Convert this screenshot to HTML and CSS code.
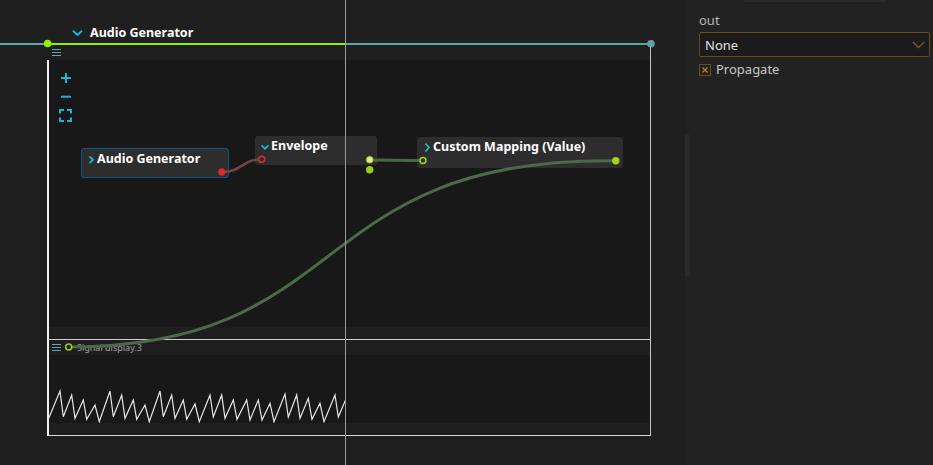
FILE: index.html
```html
<!DOCTYPE html>
<html>
<head>
<meta charset="utf-8">
<link rel="stylesheet" href="styles.css">
</head>
<body>
<div class="app">
  <div class="editor">
    <div class="group-title">
      <svg class="chev-title" width="11" height="6" viewBox="0 0 11 6"><path d="M1 0.8 L5.5 5 L10 0.8" fill="none" stroke="#19b5d6" stroke-width="2"/></svg>
      <span>Audio Generator</span>
    </div>
    <div class="frame">
      <div class="frame-head">
        <svg width="9" height="7" viewBox="0 0 9 7"><path d="M0 0.5h9M0 3.5h9M0 6.5h9" stroke="#5fa9ae" stroke-width="1"/></svg>
      </div>
      <div class="frame-body">
        <div class="canvas">
          <svg class="tool tool-plus" width="12" height="12" viewBox="0 0 12 12"><path d="M6 1v10M1 6h10" stroke="#1ab4d8" stroke-width="2"/></svg>
          <svg class="tool tool-minus" width="12" height="12" viewBox="0 0 12 12"><path d="M1 5.7h10" stroke="#1ab4d8" stroke-width="2"/></svg>
          <svg class="tool tool-fit" width="13" height="13" viewBox="0 0 13 13"><path d="M1 4.5V1h4M8 1h4v3.5M12 8.5V12H8M5 12H1V8.5" fill="none" stroke="#1ab4d8" stroke-width="2"/></svg>
        </div>
        <div class="strip"></div>
        <div class="signal">
          <div class="signal-head">
            <svg width="9" height="7" viewBox="0 0 9 7"><path d="M0 0.5h9M0 3.5h9M0 6.5h9" stroke="#5fa9ae" stroke-width="1"/></svg>
            <span class="signal-name">Signal display.3</span>
          </div>
          <div class="plot"></div>
          <div class="strip"></div>
        </div>
      </div>
    </div>

    <div class="node node-ag">
      <svg class="chev" width="8" height="16" viewBox="0 0 8 16"><path d="M2.5 6.5 L6 9.8 L2.5 13.1" fill="none" stroke="#19b5d6" stroke-width="1.8"/></svg>
      <span>Audio Generator</span>
    </div>
    <div class="node node-env">
      <svg class="chev" width="8" height="16" viewBox="0 0 8 16"><path d="M0.5 8.3 L4 11.7 L7.5 8.3" fill="none" stroke="#19b5d6" stroke-width="1.8"/></svg>
      <span>Envelope</span>
    </div>
    <div class="node node-map">
      <svg class="chev" width="8" height="16" viewBox="0 0 8 16"><path d="M2.5 5.5 L6 9.5 L2.5 13.5" fill="none" stroke="#19b5d6" stroke-width="1.8"/></svg>
      <span>Custom Mapping (Value)</span>
    </div>

    <svg class="wires" width="685" height="465" viewBox="0 0 685 465">
      <defs>
        <clipPath id="plotclip"><rect x="48" y="355" width="297" height="68"/></clipPath>
      </defs>
      <line x1="0" y1="44" x2="47" y2="44" stroke="#5fa5a8" stroke-width="2"/>
      <line x1="47" y1="44" x2="345" y2="44" stroke="#8fef00" stroke-width="2"/>
      <line x1="345" y1="44" x2="651" y2="44" stroke="#5fa5a8" stroke-width="2"/>
      <circle cx="47.6" cy="43.5" r="3.8" fill="#8fef00"/>
      <circle cx="651" cy="43.8" r="3.8" fill="#5fa5a8"/>

      <polyline clip-path="url(#plotclip)" fill="none" stroke="#e6e6e6" stroke-width="1.2" stroke-linejoin="miter"
        points="48,420 60,391 63.3,416.7 71.7,395 75,418.3 83.3,400 86.7,419.3 95,405 99.3,421.7 110,391 113.3,416.7 121.7,395 125,418.3 133.3,400 136.7,419.3 145,405 149.3,421.7 160,391 163.3,416.7 171.7,395 175,418.3 183.3,400 186.7,419.3 195,404 199.3,421.7 210,395 213.3,417 221.7,395 225,418.3 233.3,400 237,419.3 246.7,400 250,420 258.3,400 262,420 270,403.3 274,421.7 285,394 288.3,417 296.7,395 300,418.3 308.3,398.3 312,419.3 320,403.3 324,421.7 335,395 338.3,417 346,399"/>

      <path d="M222 172 C242 172 242 159.3 261.7 159.3" fill="none" stroke="#6c4846" stroke-width="2.5"/>
      <path d="M370 160 C396 160 396 160.5 423 160.5" fill="none" stroke="#4a6848" stroke-width="3"/>
      <path d="M69 347 C355 347 305 157 616 160.7" fill="none" stroke="#4b6a48" stroke-width="3"/>

      <circle cx="221.8" cy="172" r="3.7" fill="#d42b2b"/>
      <circle cx="261.7" cy="159.3" r="3" fill="#2d2d2d" stroke="#d03030" stroke-width="1.5"/>
      <circle cx="369.7" cy="159.7" r="3.3" fill="#d6ef8e" stroke="#a6d81e" stroke-width="0.8"/>
      <circle cx="369.7" cy="169.7" r="3.7" fill="#9ccc12"/>
      <circle cx="423" cy="160.4" r="3" fill="#2d2d2d" stroke="#a6d41a" stroke-width="1.5"/>
      <circle cx="615.8" cy="160.7" r="3.7" fill="#a2d418"/>
      <circle cx="68.7" cy="347" r="3" fill="#1e1e1e" stroke="#9fd014" stroke-width="1.5"/>

      <line x1="345.5" y1="0" x2="345.5" y2="465" stroke="#9a9a9a" stroke-width="1"/>
    </svg>
  </div>

  <div class="inspector">
    <div class="scroll-track"><div class="scroll-thumb"></div></div>
    <div class="insp-content">
      <div class="topbar"></div>
      <div class="label">out</div>
      <div class="select">
        <span>None</span>
        <svg width="13" height="8" viewBox="0 0 13 8"><path d="M0.8 1 L6.5 6.5 L12.2 1" fill="none" stroke="#7a5a22" stroke-width="1.3"/></svg>
      </div>
      <div class="check-row">
        <span class="checkbox">
          <svg width="10" height="10" viewBox="0 0 10 10"><path d="M2.5 2.5 L7.5 7.5 M7.5 2.5 L2.5 7.5" stroke="#c27a1e" stroke-width="1.4"/></svg>
        </span>
        <span>Propagate</span>
      </div>
    </div>
  </div>
</div>
</body>
</html>
```

FILE: styles.css
```css
* { box-sizing: border-box; }

body {
  margin: 0;
  background: #1f1f1f;
  font-family: "Noto Sans", "DejaVu Sans", sans-serif;
  overflow: hidden;
}

.app {
  display: flex;
  width: 933px;
  height: 465px;
}

.editor {
  position: relative;
  width: 685px;
  height: 465px;
  flex: none;
  overflow: hidden;
}

.group-title {
  height: 43px;
  padding: 22px 0 0 72px;
  display: flex;
  align-items: center;
  gap: 7px;
  color: #ffffff;
  font-weight: 700;
  font-size: 12.5px;
  line-height: 21px;
}

.frame {
  margin-left: 47px;
  width: 604px;
  border-top: 2px solid transparent;
  border-right: 1px solid #c6c6c6;
  display: flex;
  flex-direction: column;
}

.frame-head {
  height: 15px;
  margin-left: 1px;
  background: #1e1e1e;
  padding: 4px 0 0 4px;
  display: flex;
  align-items: flex-start;
}

.frame-body {
  border-left: 2px solid #efefef;
  border-bottom: 1px solid #d8d8d8;
}

.canvas {
  height: 267px;
  background: #181818;
  padding: 12px 0 0 11px;
  display: flex;
  flex-direction: column;
  align-items: flex-start;
}

.tool { display: block; }
.tool-minus { margin-top: 7px; }
.tool-fit { margin-top: 6px; margin-left: -1px; }

.strip {
  height: 12px;
  background: #1e1e1e;
}

.signal {
  border-top: 1px solid #cfcfcf;
}

.signal-head {
  height: 15px;
  background: #1e1e1e;
  display: flex;
  align-items: center;
  padding-left: 3px;
}

.signal-name {
  margin-left: 16px;
  font-size: 9px;
  line-height: 15px;
  color: #a0a0a0;
}

.plot {
  height: 68px;
  background: #181818;
}

.node {
  position: absolute;
  background: #2d2d2d;
  border-radius: 3px;
  display: flex;
  align-items: flex-start;
  gap: 2px;
  padding: 1px 0 0 6px;
  color: #ffffff;
  font-weight: 700;
  font-size: 12.5px;
  line-height: 17px;
  white-space: nowrap;
}

.chev { flex: none; display: block; }

.node-ag {
  left: 81px;
  top: 148px;
  width: 148px;
  height: 30px;
  border: 1px solid #0f5586;
  padding: 1px 0 0 5px;
}

.node-env {
  left: 255px;
  top: 136px;
  width: 122px;
  height: 29px;
}

.node-map {
  left: 417px;
  top: 137px;
  width: 206px;
  height: 31px;
}

.wires {
  position: absolute;
  left: 0;
  top: 0;
  pointer-events: none;
}

.inspector {
  flex: 1;
  background: #222222;
  display: flex;
}

.scroll-track {
  width: 5px;
  flex: none;
}

.scroll-thumb {
  margin-top: 135px;
  height: 141px;
  background: #2a2a2a;
}

.insp-content {
  flex: 1;
  padding: 0 3px 0 9px;
}

.topbar {
  margin-left: 45px;
  width: 141px;
  height: 2px;
  background: #2c2c2c;
}

.label {
  margin-top: 9px;
  font-size: 13px;
  line-height: 18px;
  color: #b8b8b8;
}

.select {
  margin-top: 3px;
  height: 25px;
  border: 1px solid #6b4b14;
  border-radius: 2px;
  background: #1b1b1b;
  display: flex;
  align-items: center;
  justify-content: space-between;
  padding: 0 4px 0 5px;
  color: #e0e0e0;
  font-size: 13px;
}

.check-row {
  margin-top: 4px;
  display: flex;
  align-items: center;
  gap: 5px;
  font-size: 13px;
  line-height: 17px;
  color: #c8c8c8;
}

.checkbox {
  width: 12px;
  height: 12px;
  border: 1px solid #6b4b14;
  display: flex;
  align-items: center;
  justify-content: center;
}

.checkbox svg { display: block; }
```
